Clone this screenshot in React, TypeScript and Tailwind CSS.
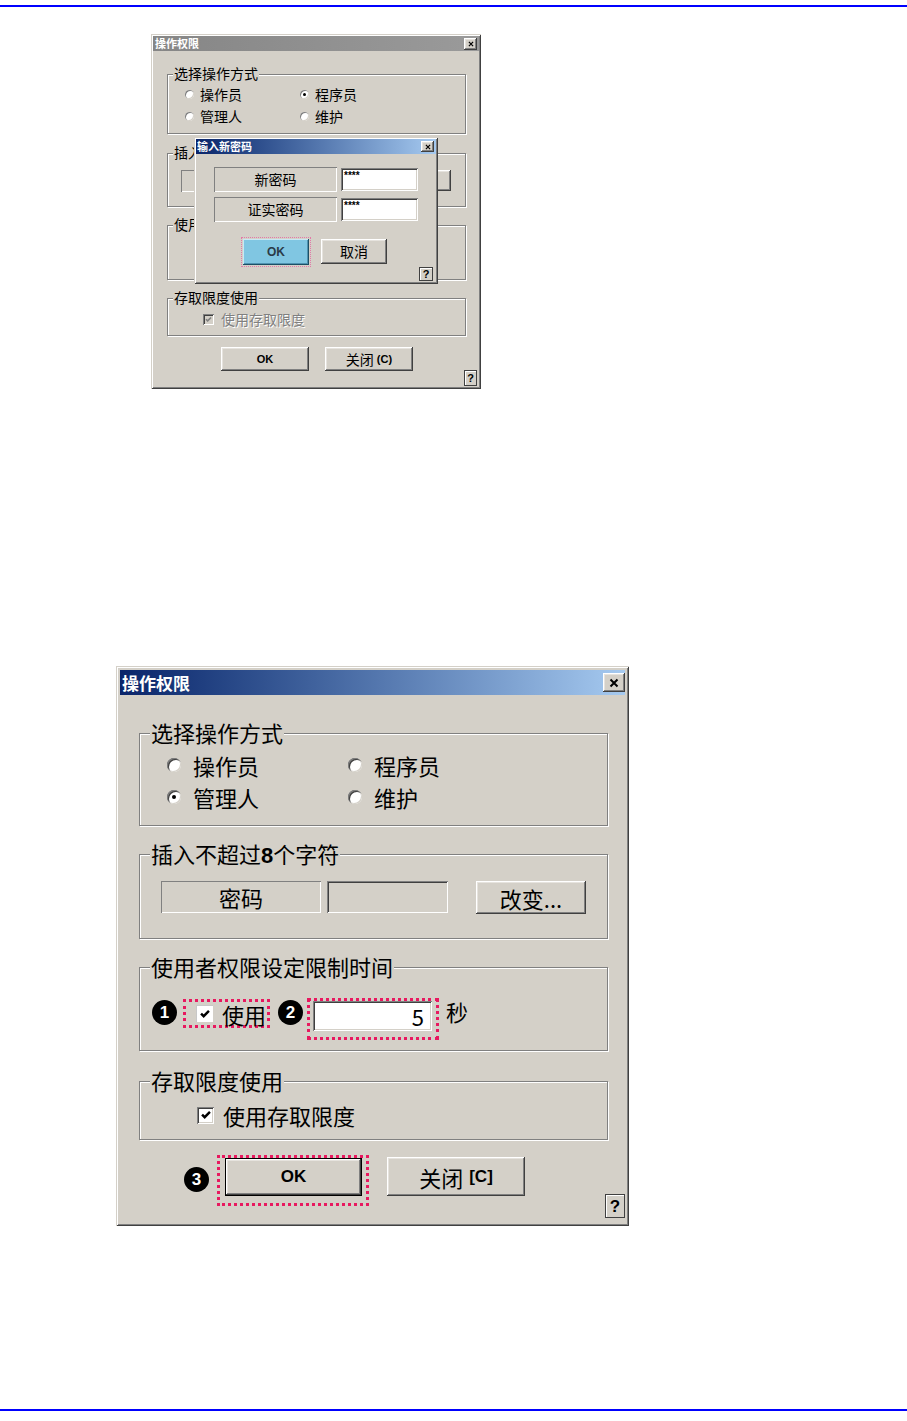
import type { ReactNode } from "react";

const cjk = "font-['Noto_Sans_CJK_SC','Liberation_Sans',sans-serif]";
const latin = "font-['Liberation_Sans',Arial,sans-serif]";

const raised = "shadow-[inset_-1px_-1px_0_#404040,inset_1px_1px_0_#ffffff,inset_-2px_-2px_0_#808080,inset_2px_2px_0_#e6e3de]";
const sunken = "shadow-[inset_1px_1px_0_#808080,inset_-1px_-1px_0_#ffffff,inset_2px_2px_0_#404040,inset_-2px_-2px_0_#d4d0c8]";
const etched = "shadow-[inset_1px_1px_0_#808080,inset_-1px_-1px_0_#ffffff]";
const windowFrame = "shadow-[inset_1px_1px_0_#d4d0c8,inset_-1px_-1px_0_#404040,inset_2px_2px_0_#ffffff,inset_-2px_-2px_0_#808080]";
const group = "border border-[#808080] shadow-[inset_1px_1px_0_#ffffff,1px_1px_0_#ffffff]";
const dotted = "border-[3px] border-dotted border-[#e8185f]";

function XGlyph({ className }: { className: string }) {
  return (
    <svg viewBox="0 0 10 10" className={className}>
      <path d="M1.5 1.5L8.5 8.5M8.5 1.5L1.5 8.5" stroke="#000" strokeWidth="2" fill="none" />
    </svg>
  );
}

function CheckGlyph({ className, color = "#000" }: { className: string; color?: string }) {
  return (
    <svg viewBox="0 0 16 16" className={className}>
      <path d="M3.5 7.5L6.5 10.5L12.5 4.5" stroke={color} strokeWidth="2.8" fill="none" />
    </svg>
  );
}

function Marker({ n, className = "" }: { n: string; className?: string }) {
  return (
    <div className={`flex h-[25px] w-[25px] shrink-0 items-center justify-center rounded-full bg-black text-[17px] font-bold leading-none text-white ${latin} ${className}`}>
      {n}
    </div>
  );
}

function BigRadio({ label, checked = false }: { label: string; checked?: boolean }) {
  return (
    <div className="flex h-[32px] items-center">
      <span className="flex h-[14px] w-[14px] items-center justify-center rounded-full bg-white shadow-[inset_1px_1px_0_#808080,inset_2px_2px_0_#404040,inset_-1px_-1px_0_#d4d0c8]">
        {checked && <span className="h-[4px] w-[4px] rounded-full bg-black" />}
      </span>
      <span className="ml-[12px] text-[22px] leading-[24px]">{label}</span>
    </div>
  );
}

function SmallRadio({ label, checked = false }: { label: string; checked?: boolean }) {
  return (
    <div className="flex h-[22px] items-center">
      <span className="flex h-[9px] w-[9px] items-center justify-center rounded-full bg-white shadow-[inset_1px_1px_0_#808080,inset_-1px_-1px_0_#d4d0c8]">
        {checked && <span className="h-[3px] w-[3px] rounded-full bg-black" />}
      </span>
      <span className="ml-[6px] text-[14px] leading-[16px]">{label}</span>
    </div>
  );
}

function BigLegend({ children }: { children: ReactNode }) {
  return <legend className="ml-[10px] h-[26px] bg-[#d4d0c8] px-[1px] text-[22px] leading-[24px]">{children}</legend>;
}

function SmallLegend({ children }: { children: ReactNode }) {
  return <legend className="ml-[5px] h-[16px] bg-[#d4d0c8] px-[1px] text-[14px] leading-[15px]">{children}</legend>;
}

function PasswordDialog() {
  return (
    <div className={`absolute left-[43px] top-[103px] flex h-[147px] w-[244px] flex-col bg-[#d4d0c8] p-[2px] ${windowFrame}`}>
      <div className="flex h-[15px] items-center justify-between bg-linear-to-r from-[#0a246a] to-[#a6caf0] pl-[1px] pr-[2px]">
        <span className="text-[11px] font-bold leading-none text-white">输入新密码</span>
        <span className={`flex h-[11px] w-[13px] items-center justify-center bg-[#d4d0c8] ${raised}`}>
          <XGlyph className="h-[6px] w-[6px]" />
        </span>
      </div>
      <div className="flex flex-col pl-[18px]">
        {["新密码", "证实密码"].map((label, i) => (
          <div key={label} className={`flex items-start ${i === 0 ? "mt-[13px]" : "mt-[5px]"}`}>
            <div className={`flex h-[25px] w-[123px] items-center justify-center text-[14px] leading-[15px] ${etched}`}>{label}</div>
            <div className={`ml-[4px] mt-[1px] h-[23px] w-[77px] bg-white pl-[3px] pt-[3px] text-[10px] font-bold leading-none ${latin} ${sunken}`}>****</div>
          </div>
        ))}
        <div className="mt-[17px] flex items-start">
          <div className={`ml-[29px] flex h-[26px] w-[66px] items-center justify-center bg-[#80c6e2] text-[12px] font-bold text-[#2a3a48] outline-1 outline-dotted outline-offset-[1px] outline-[#e27aa8] shadow-[inset_-1px_-1px_0_#1d4f66,inset_1px_1px_0_#c8e8f4,inset_-2px_-2px_0_#4e93b0] ${latin}`}>
            OK
          </div>
          <div className={`ml-[12px] flex h-[25px] w-[66px] items-center justify-center bg-[#d4d0c8] text-[14px] leading-[15px] ${raised}`}>取消</div>
        </div>
        <div className="mr-[3px] mt-[2px] flex justify-end">
          <div className={`flex h-[14px] w-[14px] items-center justify-center border border-[#404040] bg-[#d4d0c8] text-[11px] font-bold leading-none shadow-[inset_1px_1px_0_#ffffff] ${latin}`}>?</div>
        </div>
      </div>
    </div>
  );
}

function SmallDialog() {
  return (
    <div className={`relative ml-[151px] mt-[27px] flex h-[355px] w-[330px] flex-col bg-[#d4d0c8] p-[2px] ${windowFrame}`}>
      <div className="flex h-[15px] items-center justify-between bg-linear-to-r from-[#868686] to-[#9a9a9a] pl-[2px] pr-[2px]">
        <span className="text-[11px] font-bold leading-none text-white">操作权限</span>
        <span className={`flex h-[12px] w-[13px] items-center justify-center bg-[#d4d0c8] ${raised}`}>
          <XGlyph className="h-[6px] w-[6px]" />
        </span>
      </div>
      <div className="flex flex-col pl-[14px]">
        <fieldset className={`mt-[15px] h-[68px] w-[299px] ${group}`}>
          <SmallLegend>选择操作方式</SmallLegend>
          <div className="grid grid-cols-[115px_1fr] pl-[17px] pt-[1px]">
            <SmallRadio label="操作员" />
            <SmallRadio label="程序员" checked />
            <SmallRadio label="管理人" />
            <SmallRadio label="维护" />
          </div>
        </fieldset>
        <fieldset className={`mt-[11px] h-[62px] w-[299px] ${group}`}>
          <SmallLegend>
            插入不超过<span className={`font-bold ${latin}`}>8</span>个字符
          </SmallLegend>
          <div className="flex items-start pl-[13px] pt-[9px]">
            <div className={`flex h-[22px] w-[103px] items-center justify-center text-[14px] leading-[15px] ${etched}`}>密码</div>
            <div className={`ml-[4px] h-[22px] w-[78px] ${sunken}`} />
            <div className={`ml-[18px] flex h-[21px] w-[67px] items-center justify-center text-[14px] leading-[15px] ${raised}`}>改变...</div>
          </div>
        </fieldset>
        <fieldset className={`mt-[10px] h-[63px] w-[299px] ${group}`}>
          <SmallLegend>使用者权限设定限制时间</SmallLegend>
        </fieldset>
        <fieldset className={`mt-[10px] h-[46px] w-[299px] ${group}`}>
          <SmallLegend>存取限度使用</SmallLegend>
          <div className="mt-[4px] flex h-[18px] items-center pl-[35px]">
            <span className={`flex h-[11px] w-[11px] items-center justify-center bg-[#d4d0c8] ${sunken}`}>
              <CheckGlyph className="h-[9px] w-[9px]" color="#808080" />
            </span>
            <span className="ml-[7px] text-[14px] leading-[15px] text-[#808080] [text-shadow:1px_1px_0_#ffffff]">使用存取限度</span>
          </div>
        </fieldset>
        <div className="mt-[11px] flex items-start">
          <div className={`ml-[54px] flex h-[24px] w-[88px] items-center justify-center text-[11px] font-bold ${latin} ${raised}`}>OK</div>
          <div className={`ml-[16px] flex h-[24px] w-[88px] items-center justify-center text-[14px] leading-[15px] ${raised}`}>
            关闭 <span className={`ml-[3px] align-[-1px] text-[11px] font-bold ${latin}`}>(C)</span>
          </div>
          <div className={`ml-auto mr-[2px] mt-[23px] flex h-[16px] w-[13px] items-center justify-center border border-[#404040] text-[11px] font-bold leading-none shadow-[inset_1px_1px_0_#ffffff] ${latin}`}>?</div>
        </div>
      </div>
      <PasswordDialog />
    </div>
  );
}

function BigDialog() {
  return (
    <div className={`ml-[116px] mt-[277px] flex h-[560px] w-[513px] flex-col bg-[#d4d0c8] p-[4px] ${windowFrame}`}>
      <div className="flex h-[25px] items-center justify-between bg-linear-to-r from-[#0a246a] to-[#a6caf0] pl-[2px]">
        <span className="text-[17px] font-bold leading-none text-white">操作权限</span>
        <span className={`flex h-[19px] w-[22px] items-center justify-center bg-[#d4d0c8] ${raised}`}>
          <XGlyph className="h-[10px] w-[10px]" />
        </span>
      </div>
      <div className="flex flex-col pl-[19px]">
        <fieldset className={`mt-[25px] h-[106px] w-[469px] ${group}`}>
          <BigLegend>选择操作方式</BigLegend>
          <div className="grid grid-cols-[181px_1fr] pl-[27px] pt-[3px]">
            <BigRadio label="操作员" />
            <BigRadio label="程序员" />
            <BigRadio label="管理人" checked />
            <BigRadio label="维护" />
          </div>
        </fieldset>

        <fieldset className={`mt-[15px] h-[98px] w-[469px] ${group}`}>
          <BigLegend>
            插入不超过<span className={`font-bold ${latin}`}>8</span>个字符
          </BigLegend>
          <div className="flex items-start pl-[21px] pt-[14px]">
            <div className={`flex h-[32px] w-[160px] items-center justify-center text-[22px] leading-[24px] ${etched}`}>密码</div>
            <div className={`ml-[6px] h-[32px] w-[121px] ${sunken}`} />
            <div className={`ml-[28px] flex h-[33px] w-[110px] items-center justify-center text-[22px] leading-[24px] ${raised}`}>改变...</div>
          </div>
        </fieldset>

        <fieldset className={`mt-[15px] h-[97px] w-[469px] ${group}`}>
          <BigLegend>使用者权限设定限制时间</BigLegend>
          <div className="flex items-start pl-[12px] pt-[18px]">
            <Marker n="1" className="mt-[2px]" />
            <div className={`ml-[6px] mt-[1px] flex h-[29px] w-[87px] items-center pl-[10px] ${dotted}`}>
              <span className="flex h-[17px] w-[17px] items-center justify-center bg-white shadow-[inset_1px_1px_0_#c8c8c8]">
                <CheckGlyph className="h-[14px] w-[14px]" />
              </span>
              <span className="ml-[9px] text-[22px] leading-[24px]">使用</span>
            </div>
            <Marker n="2" className="ml-[8px] mt-[2px]" />
            <div className={`ml-[4px] h-[42px] w-[132px] pl-[3px] ${dotted}`}>
              <div className={`flex h-[30px] w-[119px] items-center justify-end bg-white pr-[8px] text-[22px] leading-none ${sunken}`}>5</div>
            </div>
            <span className="ml-[7px] text-[22px] leading-[26px]">秒</span>
          </div>
        </fieldset>

        <fieldset className={`mt-[17px] h-[72px] w-[469px] ${group}`}>
          <BigLegend>存取限度使用</BigLegend>
          <div className="mt-[8px] flex h-[26px] items-center pl-[57px]">
            <span className={`flex h-[17px] w-[17px] items-center justify-center bg-white ${sunken}`}>
              <CheckGlyph className="h-[14px] w-[14px]" />
            </span>
            <span className="ml-[9px] text-[22px] leading-[24px]">使用存取限度</span>
          </div>
        </fieldset>

        <div className="mt-[15px] flex items-start">
          <Marker n="3" className="ml-[45px] mt-[12px]" />
          <div className={`ml-[8px] h-[51px] w-[152px] pl-[5px] ${dotted}`}>
            <div className={`flex h-[38px] w-[137px] items-center justify-center border border-black text-[17px] font-bold ${latin} ${raised}`}>OK</div>
          </div>
          <div className={`ml-[18px] mt-[2px] flex h-[39px] w-[138px] items-center justify-center text-[22px] leading-[24px] ${raised}`}>
            关闭<span className={`ml-[6px] align-[-2px] text-[17px] font-bold ${latin}`}>[C]</span>
          </div>
          <div className={`ml-auto mt-[39px] flex h-[24px] w-[20px] items-center justify-center border border-[#404040] text-[17px] font-bold leading-none shadow-[inset_1px_1px_0_#ffffff] ${latin}`}>?</div>
        </div>
      </div>
    </div>
  );
}

export default function App() {
  return (
    <div className={`flex h-[1421px] w-[907px] flex-col bg-white text-black ${cjk}`}>
      <div className="mt-[5px] h-[2px] bg-[#0000ff]" />
      <SmallDialog />
      <BigDialog />
      <div className="mt-[183px] h-[2px] bg-[#0000ff]" />
    </div>
  );
}
